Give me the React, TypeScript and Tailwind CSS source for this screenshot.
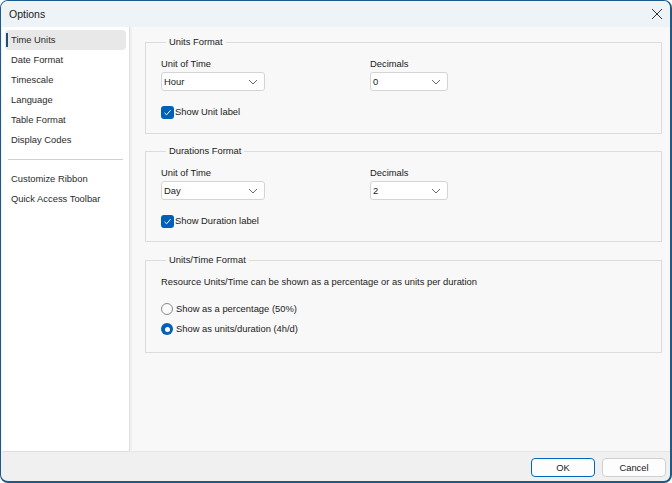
import { useState } from "react";

const font = { fontFamily: '"Liberation Sans", Arial, sans-serif' };

function Chevron() {
  return (
    <svg width="10" height="6" viewBox="0 0 10 6" className="text-[#6b6b6b]">
      <path d="M1 1 L5 5 L9 1" fill="none" stroke="currentColor" strokeWidth="1" />
    </svg>
  );
}

function Select({ value, width }: { value: string; width: string }) {
  return (
    <div
      className={`${width} h-[19px] bg-white border border-[#d4d4d4] rounded-[3px] flex items-center justify-between pl-[2px] pr-[6px] text-[#1a1a1a]`}
    >
      <span>{value}</span>
      <Chevron />
    </div>
  );
}

function Checkbox({ label }: { label: string }) {
  return (
    <div className="flex items-center h-4">
      <div className="w-[13px] h-[13px] rounded-[3px] bg-[#005fb8] flex items-center justify-center">
        <svg width="9" height="9" viewBox="0 0 9 9">
          <path d="M1.5 4.8 L3.6 6.8 L7.6 2.2" fill="none" stroke="white" strokeWidth="1" />
        </svg>
      </div>
      <span className="ml-[1px]">{label}</span>
    </div>
  );
}

function Radio({ label, checked }: { label: string; checked?: boolean }) {
  return (
    <div className="flex items-center h-5">
      {checked ? (
        <div className="w-3 h-3 rounded-full bg-[#005fb8] flex items-center justify-center">
          <div className="w-[5px] h-[5px] rounded-full bg-white" />
        </div>
      ) : (
        <div className="w-3 h-3 rounded-full border border-[#8a8a8a] bg-[#fbfbfb]" />
      )}
      <span className="ml-[3px]">{label}</span>
    </div>
  );
}

function GroupBox({ title, className, children }: { title: string; className?: string; children: React.ReactNode }) {
  return (
    <fieldset className={`border border-[#dcdcdc] mr-[8px] pl-[15px] ${className ?? ""}`}>
      <legend className="ml-[5px] px-[3px] h-4 leading-4 text-[#1a1a1a]">{title}</legend>
      {children}
    </fieldset>
  );
}

function FormatRow({ unit, decimals, check }: { unit: string; decimals: string; check: string }) {
  return (
    <div className="pt-[6px]">
      <div className="flex">
        <div className="w-[209px]">
          <div className="h-4 leading-4">Unit of Time</div>
          <Select value={unit} width="w-[104px]" />
        </div>
        <div>
          <div className="h-4 leading-4">Decimals</div>
          <Select value={decimals} width="w-[78px]" />
        </div>
      </div>
      <div className="mt-[13px]">
        <Checkbox label={check} />
      </div>
    </div>
  );
}

export default function App() {
  const [active] = useState("Time Units");
  const items = ["Time Units", "Date Format", "Timescale", "Language", "Table Format", "Display Codes"];
  const items2 = ["Customize Ribbon", "Quick Access Toolbar"];

  return (
    <div
      style={font}
      className="w-[672px] h-[483px] bg-[#f0f0f0] border border-[#1c5a8c] border-r-2 border-b-2 rounded-[8px] overflow-hidden flex flex-col text-[9.4px] leading-4 text-[#1a1a1a]"
    >
      {/* Title bar */}
      <div className="h-[26px] shrink-0 bg-[#eef3f8] flex items-center justify-between pl-[8px] pr-[7px]">
        <span className="text-[10.5px]">Options</span>
        <svg width="12" height="12" viewBox="0 0 12 12">
          <path d="M1 1 L11 11 M11 1 L1 11" stroke="#333" strokeWidth="1" />
        </svg>
      </div>

      {/* Body */}
      <div className="flex h-[425px] shrink-0 pl-[1px]">
        <div className="w-[128px] bg-white border-r border-b border-[#dedede] pt-[3px] px-[3px]">
          {items.map((it) => (
            <div
              key={it}
              className={`h-5 flex items-center rounded-[4px] relative pl-[6px] ${it === active ? "bg-[#e8e8e8]" : ""}`}
            >
              {it === active && <div className="absolute left-[1px] top-[3px] w-[2px] h-[14px] bg-[#1f4e79]" />}
              <span className="text-[#2b2b2b]">{it}</span>
            </div>
          ))}
          <div className="mx-[3px] my-[9px] border-t border-[#d0d0d0]" />
          {items2.map((it) => (
            <div key={it} className="h-5 flex items-center pl-[6px]">
              <span className="text-[#2b2b2b]">{it}</span>
            </div>
          ))}
        </div>
        <div className="flex-1 ml-[2px] bg-[#f8f8f8] border-b border-[#e4e4e4] pl-[13px] pt-[7px]">
          <GroupBox title="Units Format" className="pb-[13px]">
            <FormatRow unit="Hour" decimals="0" check="Show Unit label" />
          </GroupBox>
          <GroupBox title="Durations Format" className="mt-[9px] pb-[12px]">
            <FormatRow unit="Day" decimals="2" check="Show Duration label" />
          </GroupBox>
          <GroupBox title="Units/Time Format" className="mt-[10px] pb-[13px]">
            <div className="pt-[6px] h-[22px] leading-4">
              Resource Units/Time can be shown as a percentage or as units per duration
            </div>
            <div className="mt-[9px]">
              <Radio label="Show as a percentage (50%)" />
              <Radio label="Show as units/duration (4h/d)" checked />
            </div>
          </GroupBox>
        </div>
      </div>

      {/* Footer */}
      <div className="flex-1 flex justify-end items-start pt-[6px] pr-[4px] gap-[7px]">
        <button className="w-[64px] h-[19px] rounded-[4px] bg-[#fdfdfd] border border-[#0067c0] leading-4">OK</button>
        <button className="w-[64px] h-[19px] rounded-[4px] bg-[#fdfdfd] border border-[#cfcfcf] leading-4">Cancel</button>
      </div>
    </div>
  );
}
